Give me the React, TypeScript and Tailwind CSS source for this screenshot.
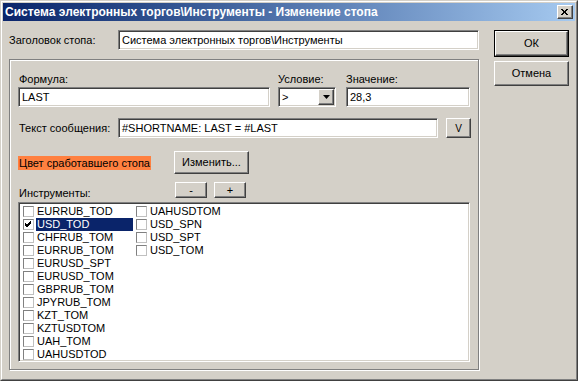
import React from "react";

const sunken =
  "border border-t-[#808080] border-l-[#808080] border-b-white border-r-white shadow-[inset_1px_1px_0_#404040,inset_-1px_-1px_0_#d4d0c8] bg-white";
const raised =
  "border border-t-white border-l-white border-b-[#404040] border-r-[#404040] shadow-[inset_-1px_-1px_0_#808080] bg-[#d4d0c8]";

const col1 = [
  "EURRUB_TOD",
  "USD_TOD",
  "CHFRUB_TOM",
  "EURRUB_TOM",
  "EURUSD_SPT",
  "EURUSD_TOM",
  "GBPRUB_TOM",
  "JPYRUB_TOM",
  "KZT_TOM",
  "KZTUSDTOM",
  "UAH_TOM",
  "UAHUSDTOD",
];
const col2 = ["UAHUSDTOM", "USD_SPN", "USD_SPT", "USD_TOM"];

function Button({ label, className }: { label: string; className: string }) {
  return (
    <div className={`${raised} flex items-center justify-center ${className}`}>
      {label}
    </div>
  );
}

function Item({ name, checked, selected }: { name: string; checked?: boolean; selected?: boolean }) {
  return (
    <div className="flex h-[13px] items-center">
      <div className="flex h-[11px] w-[11px] items-center justify-center border border-t-[#808080] border-l-[#808080] border-b-[#c0c0c0] border-r-[#c0c0c0] bg-white">
        {checked ? (
          <svg width="9" height="9" viewBox="0 0 9 9">
            <path d="M1 4 L3 6 L7 2 M1 5 L3 7 L7 3 M1 3 L3 5 L7 1" stroke="#000" strokeWidth="1" fill="none" />
          </svg>
        ) : null}
      </div>
      <div
        className={`ml-[2px] flex h-[13px] items-center pl-px ${
          selected ? "w-[97px] bg-[#0a246a] text-white" : ""
        }`}
      >
        {name}
      </div>
    </div>
  );
}

export default function App() {
  return (
    <div
      className="relative h-[381px] w-[578px] overflow-hidden border border-t-[#d4d0c8] border-l-[#d4d0c8] border-b-[#404040] border-r-[#404040] bg-[#d4d0c8] text-[11px] leading-[13px] text-black"
      style={{ fontFamily: '"Liberation Sans", Arial, sans-serif' }}
    >
      <div className="h-full w-full border border-t-white border-l-white border-b-[#808080] border-r-[#808080] p-px">
        {/* title bar */}
        <div className="flex h-[18px] items-center justify-between bg-gradient-to-r from-[#0a246a] to-[#a6caf0] pl-[2px] pr-[2px]">
          <span className="text-[12px] font-bold text-white">
            Система электронных торгов\Инструменты - Изменение стопа
          </span>
          <div className={`${raised} flex h-[14px] w-[16px] items-center justify-center`}>
            <svg width="8" height="7" viewBox="0 0 8 7">
              <path d="M0 0 L6 6 M1 0 L7 6 M6 0 L0 6 M7 0 L1 6" stroke="#000" strokeWidth="1" fill="none" />
            </svg>
          </div>
        </div>

        <div className="flex pl-[6px] pt-[9px]">
          {/* left */}
          <div className="w-[471px]">
            <div className="flex h-[20px] items-center">
              <span className="w-[109px]">Заголовок стопа:</span>
              <div className={`${sunken} flex h-[20px] w-[361px] items-center pl-[3px]`}>
                Система электронных торгов\Инструменты
              </div>
            </div>

            <div className="mt-[9px] h-[311px] w-[470px] border border-[#808080] shadow-[1px_1px_0_#fff,inset_1px_1px_0_#fff] pl-[8px] pt-[12px]">
              <div className="flex">
                <div className="w-[252px]">
                  <div className="h-[15px] pl-px pt-px">Формула:</div>
                  <div className={`${sunken} flex h-[20px] items-center pl-[3px]`}>LAST</div>
                </div>
                <div className="ml-[8px] w-[58px]">
                  <div className="h-[15px] pt-px">Условие:</div>
                  <div className={`${sunken} flex h-[20px] items-center justify-between pl-[3px] pr-px`}>
                    <span>&gt;</span>
                    <div className={`${raised} flex h-[16px] w-[16px] items-center justify-center`}>
                      <svg width="7" height="4" viewBox="0 0 7 4">
                        <path d="M0 0 H7 L3.5 4 Z" fill="#000" />
                      </svg>
                    </div>
                  </div>
                </div>
                <div className="ml-[10px] w-[124px]">
                  <div className="h-[15px] pt-px">Значение:</div>
                  <div className={`${sunken} flex h-[20px] items-center pl-[3px]`}>28,3</div>
                </div>
              </div>

              <div className="mt-[11px] flex h-[20px] items-center">
                <span className="w-[100px] pl-px">Текст сообщения:</span>
                <div className={`${sunken} flex h-[20px] w-[320px] items-center pl-[3px]`}>
                  #SHORTNAME: LAST = #LAST
                </div>
                <Button label="V" className="ml-[8px] h-[20px] w-[25px] text-[10px]" />
              </div>

              <div className="mt-[13px] flex h-[23px] items-center">
                <span className="h-[14px] w-[133px] bg-[#ff8040] pl-px leading-[14px]">
                  Цвет сработавшего стопа
                </span>
                <Button label="Изменить..." className="ml-[23px] h-[23px] w-[75px]" />
              </div>

              <div className="mt-[8px] flex h-[16px] items-start">
                <span className="w-[157px] pl-px pt-[5px]">Инструменты:</span>
                <Button label="-" className="h-[16px] w-[32px]" />
                <Button label="+" className="ml-[7px] h-[16px] w-[32px]" />
              </div>

              <div className={`${sunken} mt-[4px] flex h-[160px] w-[452px] pl-[4px] pt-[2px]`}>
                <div className="w-[113px]">
                  {col1.map((n, i) => (
                    <Item key={n} name={n} checked={i === 1} selected={i === 1} />
                  ))}
                </div>
                <div>
                  {col2.map((n) => (
                    <Item key={n} name={n} />
                  ))}
                </div>
              </div>
            </div>
          </div>

          {/* right */}
          <div className="ml-[14px] flex flex-col">
            <div className="border border-black">
              <Button label="ОК" className="h-[25px] w-[73px]" />
            </div>
            <Button label="Отмена" className="mt-[4px] h-[25px] w-[75px]" />
          </div>
        </div>
      </div>
    </div>
  );
}
